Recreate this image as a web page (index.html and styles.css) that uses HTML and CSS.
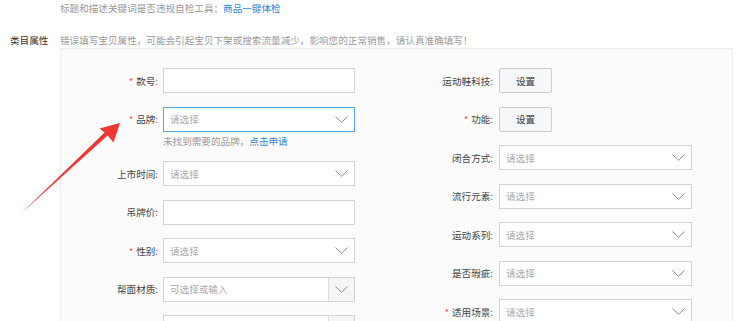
FILE: index.html
```html
<!DOCTYPE html>
<html lang="zh-CN">
<head>
<meta charset="utf-8">
<title>类目属性</title>
<link rel="stylesheet" href="styles.css">
</head>
<body>
<div class="page">
  <div class="tip-line">标题和描述关键词是否违规自检工具：<a class="link">商品一键体检</a></div>
  <div class="section">
    <div class="section-label">类目属性</div>
    <div class="section-body">
      <div class="warn">错误填写宝贝属性，可能会引起宝贝下架或搜索流量减少，影响您的正常销售，请认真准确填写！</div>
      <div class="panel">
        <div class="col col-left">
          <div class="row">
            <div class="label"><span class="req">*</span>款号:</div>
            <div class="field input"></div>
          </div>
          <div class="row-block">
            <div class="row">
              <div class="label"><span class="req">*</span>品牌:</div>
              <div class="field select focus"><span class="ph">请选择</span><svg class="chev" viewBox="0 0 13 7"><path d="M0.5 0.5 L6.5 6.3 L12.5 0.5"/></svg></div>
            </div>
            <div class="help">未找到需要的品牌，<a class="link">点击申请</a></div>
          </div>
          <div class="row">
            <div class="label">上市时间:</div>
            <div class="field select"><span class="ph">请选择</span><svg class="chev" viewBox="0 0 13 7"><path d="M0.5 0.5 L6.5 6.3 L12.5 0.5"/></svg></div>
          </div>
          <div class="row">
            <div class="label">吊牌价:</div>
            <div class="field input"></div>
          </div>
          <div class="row">
            <div class="label"><span class="req">*</span>性别:</div>
            <div class="field select"><span class="ph">请选择</span><svg class="chev" viewBox="0 0 13 7"><path d="M0.5 0.5 L6.5 6.3 L12.5 0.5"/></svg></div>
          </div>
          <div class="row">
            <div class="label">帮面材质:</div>
            <div class="field combo"><span class="ph">可选择或输入</span><span class="combo-btn"><svg class="chev" viewBox="0 0 13 7"><path d="M0.5 0.5 L6.5 6.3 L12.5 0.5"/></svg></span></div>
          </div>
          <div class="row">
            <div class="label"></div>
            <div class="field combo"><span class="ph"></span><span class="combo-btn"></span></div>
          </div>
        </div>
        <div class="col col-right">
          <div class="row">
            <div class="label">运动鞋科技:</div>
            <div class="btn">设置</div>
          </div>
          <div class="row">
            <div class="label"><span class="req">*</span>功能:</div>
            <div class="btn">设置</div>
          </div>
          <div class="row">
            <div class="label">闭合方式:</div>
            <div class="field select"><span class="ph">请选择</span><svg class="chev" viewBox="0 0 13 7"><path d="M0.5 0.5 L6.5 6.3 L12.5 0.5"/></svg></div>
          </div>
          <div class="row">
            <div class="label">流行元素:</div>
            <div class="field select"><span class="ph">请选择</span><svg class="chev" viewBox="0 0 13 7"><path d="M0.5 0.5 L6.5 6.3 L12.5 0.5"/></svg></div>
          </div>
          <div class="row">
            <div class="label">运动系列:</div>
            <div class="field select"><span class="ph">请选择</span><svg class="chev" viewBox="0 0 13 7"><path d="M0.5 0.5 L6.5 6.3 L12.5 0.5"/></svg></div>
          </div>
          <div class="row">
            <div class="label">是否瑕疵:</div>
            <div class="field select"><span class="ph">请选择</span><svg class="chev" viewBox="0 0 13 7"><path d="M0.5 0.5 L6.5 6.3 L12.5 0.5"/></svg></div>
          </div>
          <div class="row">
            <div class="label"><span class="req">*</span>适用场景:</div>
            <div class="field select"><span class="ph">请选择</span><svg class="chev" viewBox="0 0 13 7"><path d="M0.5 0.5 L6.5 6.3 L12.5 0.5"/></svg></div>
          </div>
        </div>
      </div>
    </div>
  </div>
  <svg class="arrow" width="750" height="321" viewBox="0 0 750 321">
    <polygon points="120,123 99.5,128.5 104.6,132.6 21,213.5 107.6,135.6 113.5,142.5"/>
  </svg>
</div>
</body>
</html>
```

FILE: styles.css
```css
html, body {
  margin: 0;
  padding: 0;
  background: #fff;
}
body {
  width: 750px;
  height: 321px;
  overflow: hidden;
  font-family: "Noto Sans CJK SC", "Noto Sans", sans-serif;
  font-size: 9.6px;
  color: #333;
}
.page {
  position: relative;
  width: 750px;
  height: 321px;
  overflow: hidden;
}
.link {
  color: #2f86d6;
  text-decoration: none;
}
.tip-line {
  padding-left: 60px;
  line-height: 16px;
  height: 16px;
  color: #999;
}
.section {
  display: flex;
  margin-top: 16px;
}
.section-label {
  width: 50px;
  padding-left: 10px;
  line-height: 16px;
  color: #333;
}
.section-body {
  width: 673px;
}
.warn {
  line-height: 16px;
  height: 16px;
  color: #999;
}
.panel {
  display: flex;
  background: #fbfbfb;
  border: 1px solid #eee;
  border-bottom: none;
  padding-top: 19px;
  height: 273px;
  box-sizing: border-box;
  overflow: hidden;
}
.col {
  display: flex;
  flex-direction: column;
}
.row {
  display: flex;
  align-items: center;
  flex-shrink: 0;
  height: 25px;
  margin-bottom: 13.5px;
}
.row-block {
  flex-shrink: 0;
  margin-bottom: 13.5px;
}
.row-block .row {
  margin-bottom: 0;
}
.label {
  text-align: right;
  color: #444;
  white-space: nowrap;
}
.col-left .label {
  width: 97px;
  margin-right: 5px;
}
.col-right .label {
  width: 138px;
  margin-right: 6px;
}
.req {
  color: #f04848;
  margin-right: 3px;
  font-size: 9px;
}
.field {
  height: 25px;
  box-sizing: border-box;
  border: 1px solid #d3d3d3;
  background: #fff;
  display: flex;
  align-items: center;
}
.col-left .field {
  width: 192px;
}
.col-right .field {
  width: 193px;
}
.select.focus {
  border-color: #5aa6e8;
}
.ph {
  flex: 1;
  padding-left: 6px;
  color: #aaa;
}
.chev {
  width: 13px;
  height: 7px;
  margin-right: 6px;
  fill: none;
  stroke: #8a8a8a;
  stroke-width: 1;
}
.combo-btn {
  width: 25px;
  height: 100%;
  background: #f5f5f7;
  border-left: 1px solid #ddd;
  display: flex;
  align-items: center;
  justify-content: center;
}
.combo-btn .chev {
  margin-right: 0;
}
.help {
  margin-top: 2px;
  margin-left: 102px;
  line-height: 14px;
  color: #999;
}
.btn {
  width: 53px;
  height: 25px;
  box-sizing: border-box;
  border: 1px solid #ccc;
  border-radius: 2px;
  background: #f6f7f9;
  display: flex;
  align-items: center;
  justify-content: center;
  color: #333;
}
.arrow {
  position: absolute;
  left: 0;
  top: 0;
  pointer-events: none;
}
.arrow polygon {
  fill: #ef3832;
}
```
